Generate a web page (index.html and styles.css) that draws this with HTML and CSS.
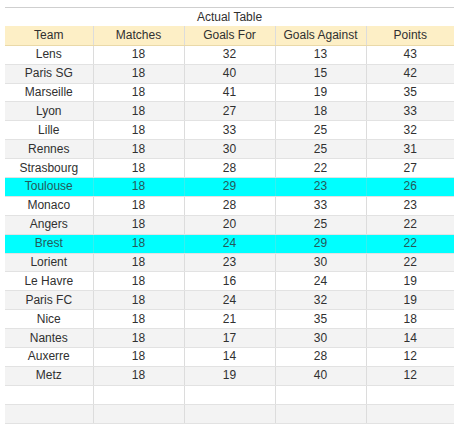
FILE: index.html
```html
<!DOCTYPE html>
<html>
<head>
<meta charset="utf-8">
<link rel="stylesheet" href="styles.css">
</head>
<body>
<table class="sheet">
  <colgroup>
    <col class="c-team"><col class="c-mid"><col class="c-mid"><col class="c-mid"><col class="c-last">
  </colgroup>
  <tr class="title"><td colspan="5">Actual Table</td></tr>
  <tr class="head"><td>Team</td><td>Matches</td><td>Goals For</td><td>Goals Against</td><td>Points</td></tr>
  <tr><td>Lens</td><td>18</td><td>32</td><td>13</td><td>43</td></tr>
  <tr class="alt"><td>Paris SG</td><td>18</td><td>40</td><td>15</td><td>42</td></tr>
  <tr><td>Marseille</td><td>18</td><td>41</td><td>19</td><td>35</td></tr>
  <tr class="alt"><td>Lyon</td><td>18</td><td>27</td><td>18</td><td>33</td></tr>
  <tr><td>Lille</td><td>18</td><td>33</td><td>25</td><td>32</td></tr>
  <tr class="alt"><td>Rennes</td><td>18</td><td>30</td><td>25</td><td>31</td></tr>
  <tr><td>Strasbourg</td><td>18</td><td>28</td><td>22</td><td>27</td></tr>
  <tr class="hl"><td>Toulouse</td><td>18</td><td>29</td><td>23</td><td>26</td></tr>
  <tr><td>Monaco</td><td>18</td><td>28</td><td>33</td><td>23</td></tr>
  <tr class="alt"><td>Angers</td><td>18</td><td>20</td><td>25</td><td>22</td></tr>
  <tr class="hl"><td>Brest</td><td>18</td><td>24</td><td>29</td><td>22</td></tr>
  <tr class="alt"><td>Lorient</td><td>18</td><td>23</td><td>30</td><td>22</td></tr>
  <tr><td>Le Havre</td><td>18</td><td>16</td><td>24</td><td>19</td></tr>
  <tr class="alt"><td>Paris FC</td><td>18</td><td>24</td><td>32</td><td>19</td></tr>
  <tr><td>Nice</td><td>18</td><td>21</td><td>35</td><td>18</td></tr>
  <tr class="alt"><td>Nantes</td><td>18</td><td>17</td><td>30</td><td>14</td></tr>
  <tr><td>Auxerre</td><td>18</td><td>14</td><td>28</td><td>12</td></tr>
  <tr class="alt"><td>Metz</td><td>18</td><td>19</td><td>40</td><td>12</td></tr>
  <tr><td></td><td></td><td></td><td></td><td></td></tr>
  <tr class="alt"><td></td><td></td><td></td><td></td><td></td></tr>
</table>
</body>
</html>
```
FILE: styles.css
```css
html, body {
  margin: 0;
  padding: 0;
  background: #ffffff;
}
body {
  padding: 7px 0 0 5px;
  font-family: "Liberation Sans", Arial, sans-serif;
  font-size: 12px;
  color: #303030;
}
.sheet {
  border-collapse: collapse;
  table-layout: fixed;
  width: 449px;
}
.c-team { width: 88px; }
.c-mid { width: 91px; }
.c-last { width: 88px; }
.sheet tr {
  height: 18.9px;
}
.sheet td {
  padding: 0;
  text-align: center;
  vertical-align: middle;
  border-left: 1px solid #dcdcdc;
  border-right: 1px solid #dcdcdc;
  border-bottom: 1px solid #e2e2e2;
  line-height: 17px;
  white-space: nowrap;
  overflow: hidden;
}
.sheet td:first-child { border-left: none; }
.sheet td:last-child { border-right: none; }
.title td {
  border-top: 1px solid #cfcfcf;
  border-bottom: none;
  background: #ffffff;
}
.head td {
  background: #fdefc6;
  border-bottom: 1px solid #ead9a8;
}
.alt td {
  background: #f3f3f3;
}
.hl td {
  background: #00ffff;
  color: #235a5a;
  border-left-color: #33f0f0;
  border-right-color: #33f0f0;
}
```
